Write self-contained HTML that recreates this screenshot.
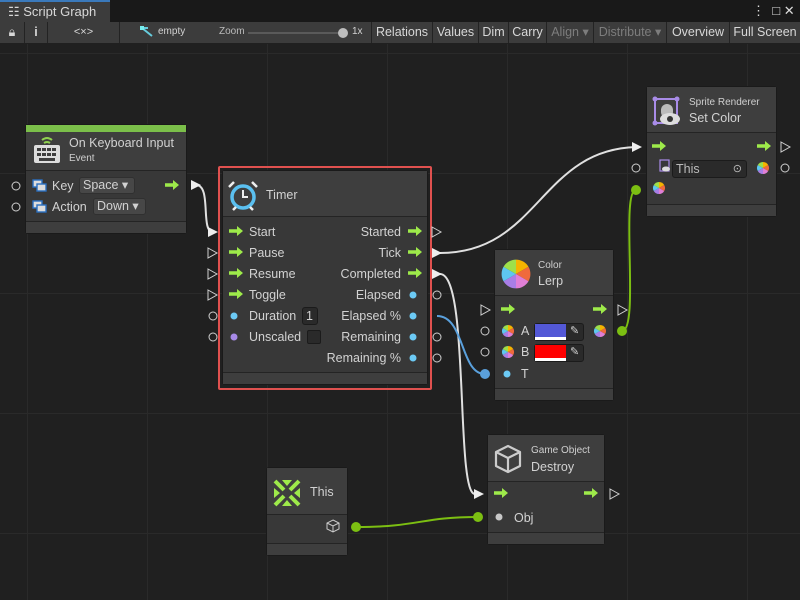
<!DOCTYPE html>
<html><head><meta charset="utf-8"><style>
*{margin:0;padding:0;box-sizing:border-box}
body{width:800px;height:600px;overflow:hidden;background:#202020;font-family:"Liberation Sans",sans-serif;color:#d2d2d2;position:relative}
.a{position:absolute}
.tb{position:absolute;top:22px;height:21px;background:#3c3c3c;border-right:1px solid #232323;font-size:12.5px;line-height:21px;text-align:center;color:#d8d8d8}
.node{position:absolute;background:#383838;border:1px solid #1a1a1a;border-radius:3px}
.hd{position:absolute;left:0;right:0;top:0;background:#3e3e3e;border-bottom:1px solid #242424}
.ft{position:absolute;left:0;right:0;bottom:0;height:12px;background:#3e3e3e;border-top:1px solid #242424}
.t{position:absolute;font-size:12.5px;white-space:nowrap;color:#d2d2d2}
.s{font-size:10px;color:#cfcfcf}
.r{text-align:right}
</style></head><body>
<!-- tab bar -->
<div class="a" style="left:0;top:0;width:800px;height:22px;background:#191919"></div>
<div class="a" style="left:0;top:0;width:110px;height:22px;background:#3c3c3c;border-top:2px solid #3a79bb"></div>
<div class="t" style="left:8px;top:4px;font-size:13px;color:#d8d8d8">&#x2637;&nbsp;Script Graph</div>
<div class="t" style="left:752px;top:3px;font-size:13px;color:#ddd">⋮&nbsp;&nbsp;□&nbsp;✕</div>
<!-- toolbar -->
<div class="a" style="left:0;top:22px;width:800px;height:21px;background:#3c3c3c;border-bottom:1px solid #232323"></div>
<div class="tb" style="left:0;width:25px">🔒︎</div>
<div class="tb" style="left:25px;width:23px;font-weight:bold">i</div>
<div class="tb" style="left:48px;width:72px;font-size:11px">&lt;×&gt;</div>
<div class="tb" style="left:120px;width:252px"></div>
<svg class="a" style="left:140px;top:26px" width="14" height="12"><path d="M2 2 L12 10 M2 2 L8 2" stroke="#6cd" stroke-width="2" fill="none"/><rect x="0" y="0" width="4" height="4" fill="#7ee"/></svg>
<div class="t" style="left:158px;top:26px;font-size:10px">empty</div>
<div class="t" style="left:219px;top:26px;font-size:10px;color:#bbb">Zoom</div>
<div class="a" style="left:248px;top:32px;width:95px;height:2px;background:#5a5a5a"></div>
<div class="a" style="left:338px;top:28px;width:10px;height:10px;border-radius:50%;background:#bdbdbd"></div>
<div class="t" style="left:352px;top:26px;font-size:10px">1x</div>
<div class="tb" style="left:372px;width:61px">Relations</div>
<div class="tb" style="left:433px;width:46px">Values</div>
<div class="tb" style="left:479px;width:30px">Dim</div>
<div class="tb" style="left:509px;width:38px">Carry</div>
<div class="tb" style="left:547px;width:47px;color:#7d7d7d">Align ▾</div>
<div class="tb" style="left:594px;width:73px;color:#7d7d7d">Distribute ▾</div>
<div class="tb" style="left:667px;width:63px">Overview</div>
<div class="tb" style="left:730px;width:70px;border-right:none">Full Screen</div>

<!-- grid -->
<svg class="a" style="left:0;top:44px" width="800" height="556">
<g stroke="#2a2a2a" stroke-width="1">
<path d="M27.5 0V556M147.5 0V556M267.5 0V556M387.5 0V556M507.5 0V556M627.5 0V556M747.5 0V556"/>
<path d="M0 9.5H800M0 129.5H800M0 249.5H800M0 369.5H800M0 489.5H800"/>
</g></svg>

<!-- Keyboard node -->
<div class="node" style="left:25px;top:124px;width:162px;height:110px">
<div class="a" style="left:0;top:0;right:0;height:7px;background:#7bbf4a"></div>
<div class="hd" style="top:7px;height:39px"></div><div class="ft"></div></div>
<svg class="a" style="left:32px;top:135px" width="30" height="30"><path d="M10 5 Q15 1 20 5 M12 8 Q15 6 18 8" stroke="#8fd14f" stroke-width="2" fill="none"/><rect x="2" y="10" width="26" height="18" rx="2" fill="#ddd"/><g fill="#3e3e3e"><rect x="5" y="13" width="4" height="3"/><rect x="10" y="13" width="4" height="3"/><rect x="15" y="13" width="4" height="3"/><rect x="20" y="13" width="4" height="3"/><rect x="5" y="18" width="4" height="3"/><rect x="10" y="18" width="4" height="3"/><rect x="15" y="18" width="4" height="3"/><rect x="20" y="18" width="4" height="3"/><rect x="7" y="23" width="16" height="3"/></g></svg>
<div class="t" style="left:69px;top:136px">On Keyboard Input</div>
<div class="t s" style="left:69px;top:153px">Event</div>
<div class="t" style="left:52px;top:179px">Key</div>
<div class="a" style="left:79px;top:177px;width:56px;height:17px;background:#474747;border:1px solid #303030;border-radius:3px;font-size:12.5px;padding-left:3px;line-height:15px">Space ▾</div>
<div class="t" style="left:52px;top:200px">Action</div>
<div class="a" style="left:93px;top:198px;width:53px;height:17px;background:#474747;border:1px solid #303030;border-radius:3px;font-size:12.5px;padding-left:3px;line-height:15px">Down ▾</div>

<!-- Timer -->
<div class="a" style="left:218px;top:166px;width:214px;height:224px;border:2px solid #e0514f;border-radius:2px"></div>
<div class="node" style="left:222px;top:170px;width:206px;height:215px"><div class="hd" style="height:46px"></div><div class="ft"></div></div>
<svg class="a" style="left:227px;top:180px" width="32" height="32"><circle cx="16" cy="17" r="11" fill="none" stroke="#5bc0f0" stroke-width="3.5"/><path d="M16 10V17H21" stroke="#eee" stroke-width="2" fill="none"/><path d="M2 7 L7 2 M30 7 L25 2 M6 30 L9 27 M26 30 L23 27" stroke="#eee" stroke-width="2.5"/></svg>
<div class="t" style="left:266px;top:188px">Timer</div>
<div class="t" style="left:249px;top:225px">Start</div>
<div class="t" style="left:249px;top:246px">Pause</div>
<div class="t" style="left:249px;top:267px">Resume</div>
<div class="t" style="left:249px;top:288px">Toggle</div>
<div class="t" style="left:249px;top:309px">Duration</div>
<div class="a" style="left:302px;top:307px;width:16px;height:18px;background:#2a2a2a;border:1px solid #1b1b1b;border-radius:3px;font-size:12.5px;padding-left:3px;line-height:16px">1</div>
<div class="t" style="left:249px;top:330px">Unscaled</div>
<div class="a" style="left:307px;top:330px;width:14px;height:14px;background:#2a2a2a;border:1px solid #1b1b1b;border-radius:2px"></div>
<div class="t r" style="right:399px;top:225px">Started</div>
<div class="t r" style="right:399px;top:246px">Tick</div>
<div class="t r" style="right:399px;top:267px">Completed</div>
<div class="t r" style="right:399px;top:288px">Elapsed</div>
<div class="t r" style="right:399px;top:309px">Elapsed %</div>
<div class="t r" style="right:399px;top:330px">Remaining</div>
<div class="t r" style="right:399px;top:351px">Remaining %</div>

<!-- Sprite Renderer -->
<div class="node" style="left:646px;top:86px;width:131px;height:131px"><div class="hd" style="height:46px"></div><div class="ft"></div></div>
<svg class="a" style="left:652px;top:96px" width="30" height="32"><rect x="3" y="3" width="22" height="24" fill="none" stroke="#a98ce8" stroke-width="2"/><circle cx="3" cy="3" r="2.5" fill="#a98ce8"/><circle cx="25" cy="3" r="2.5" fill="#a98ce8"/><circle cx="3" cy="27" r="2.5" fill="#a98ce8"/><rect x="9" y="8" width="12" height="14" rx="6" fill="#bbb"/><ellipse cx="18" cy="23" rx="10" ry="6" fill="#ddd"/><circle cx="18" cy="23" r="3" fill="#333"/></svg>
<div class="t s" style="left:689px;top:97px">Sprite Renderer</div>
<div class="t" style="left:689px;top:111px">Set Color</div>
<div class="a" style="left:672px;top:160px;width:75px;height:18px;background:#2a2a2a;border:1px solid #1b1b1b;border-radius:3px;font-size:12.5px;padding-left:3px;line-height:16px;color:#bbb">This<span style="position:absolute;right:4px;top:0;font-size:11px">⊙</span></div>

<!-- Color Lerp -->
<div class="node" style="left:494px;top:249px;width:120px;height:152px"><div class="hd" style="height:46px"></div><div class="ft"></div></div>
<div class="t s" style="left:538px;top:260px">Color</div>
<div class="t" style="left:538px;top:274px">Lerp</div>
<div class="t" style="left:521px;top:324px">A</div>
<div class="t" style="left:521px;top:345px">B</div>
<div class="t" style="left:521px;top:367px">T</div>
<div class="a" style="left:534px;top:323px;width:50px;height:18px;background:#2a2a2a;border:1px solid #1b1b1b;border-radius:3px"><div class="a" style="left:0;top:0;width:31px;height:13px;background:#5358d6;border-bottom:3px solid #fff;height:16px"></div><div class="t" style="left:35px;top:0;font-size:11px">✎</div></div>
<div class="a" style="left:534px;top:344px;width:50px;height:18px;background:#2a2a2a;border:1px solid #1b1b1b;border-radius:3px"><div class="a" style="left:0;top:0;width:31px;height:16px;background:#ff0000;border-bottom:3px solid #fff"></div><div class="t" style="left:35px;top:0;font-size:11px">✎</div></div>

<!-- This -->
<div class="node" style="left:266px;top:467px;width:82px;height:89px"><div class="hd" style="height:47px"></div><div class="ft"></div></div>
<div class="t" style="left:310px;top:485px">This</div>
<svg class="a" style="left:326px;top:519px" width="14" height="14"><path d="M7 1 L13 4 L13 10 L7 13 L1 10 L1 4 Z M1 4 L7 7 L13 4 M7 7 V13" fill="none" stroke="#ccc" stroke-width="1"/></svg>

<!-- Destroy -->
<div class="node" style="left:487px;top:434px;width:118px;height:111px"><div class="hd" style="height:47px"></div><div class="ft"></div></div>
<svg class="a" style="left:494px;top:444px" width="28" height="30"><path d="M14 2 L26 8 L26 22 L14 28 L2 22 L2 8 Z M2 8 L14 14 L26 8 M14 14 V28" fill="none" stroke="#ccc" stroke-width="2.2" stroke-linejoin="round"/></svg>
<div class="t s" style="left:531px;top:445px">Game Object</div>
<div class="t" style="left:531px;top:460px">Destroy</div>
<div class="t" style="left:514px;top:511px">Obj</div>

<!-- icons, ports, wires -->
<svg class="a" style="left:0;top:0" width="800" height="600">
<defs>
<g id="ar"><path d="M-7 -1.8H1V-5L7 0L1 5V1.8H-7Z" fill="#9eea4a"/></g>
<g id="cw"><path d="M0 0L0 -6A6 6 0 0 1 5.2 -3Z" fill="#f5b400"/><path d="M0 0L5.2 -3A6 6 0 0 1 5.2 3Z" fill="#f06a3c"/><path d="M0 0L5.2 3A6 6 0 0 1 0 6Z" fill="#e07fd6"/><path d="M0 0L0 6A6 6 0 0 1 -5.2 3Z" fill="#a87ee6"/><path d="M0 0L-5.2 3A6 6 0 0 1 -5.2 -3Z" fill="#5ec6f0"/><path d="M0 0L-5.2 -3A6 6 0 0 1 0 -6Z" fill="#9ee04a"/></g>
<g id="pk"><rect x="-6" y="-5" width="9" height="7" fill="#ddd" stroke="#2a6fc0" stroke-width="1.4"/><rect x="-2" y="-1" width="9" height="7" fill="#ddd" stroke="#2a6fc0" stroke-width="1.4"/></g>
</defs>
<g fill="none" stroke-width="2">
<path d="M196 185 C212 185 200 232 213 232" stroke="#e0e0e0"/>
<path d="M440 253 C540 253 540 147 640 147" stroke="#e0e0e0"/>
<path d="M440 274 C470 274 455 494 475 494" stroke="#e0e0e0"/>
<path d="M437 316 C465 316 460 374 485 374" stroke="#5aa0dc"/>
<path d="M622 331 C640 331 620 190 636 190" stroke="#7cbf12"/>
<path d="M356 527 C420 527 420 517 478 517" stroke="#7cbf12"/>
</g>
<g fill="#7cbf12"><circle cx="356" cy="527" r="5"/><circle cx="478" cy="517" r="5"/><circle cx="622" cy="331" r="5"/><circle cx="636" cy="190" r="5"/></g>
<circle cx="485" cy="374" r="5" fill="#5aa0dc"/>
<!-- hollow ports -->
<g fill="none" stroke="#cfcfcf" stroke-width="1"><circle cx="16" cy="186" r="4"/><circle cx="16" cy="207" r="4"/><circle cx="213" cy="316" r="4"/><circle cx="213" cy="337" r="4"/><circle cx="437" cy="295" r="4"/><circle cx="437" cy="337" r="4"/><circle cx="437" cy="358" r="4"/><circle cx="636" cy="168" r="4"/><circle cx="785" cy="168" r="4"/><circle cx="485" cy="331" r="4"/><circle cx="485" cy="352" r="4"/>
<path d="M208 248L217 253L208 258Z M208 269L217 274L208 279Z M208 290L217 295L208 300Z M432 227L441 232L432 237Z M781 142L790 147L781 152Z M481 305L490 310L481 315Z M618 305L627 310L618 315Z M610 489L619 494L610 499Z"/></g>
<g fill="#eee"><path d="M191 180L201 185L191 190Z M208 227L218 232L208 237Z M432 248L442 253L432 258Z M432 269L442 274L432 279Z M632 142L642 147L632 152Z M474 489L484 494L474 499Z"/></g>
<!-- flow arrows -->
<use href="#ar" x="172" y="185"/>
<use href="#ar" x="236" y="231"/><use href="#ar" x="236" y="252"/><use href="#ar" x="236" y="273"/><use href="#ar" x="236" y="294"/>
<use href="#ar" x="415" y="231"/><use href="#ar" x="415" y="252"/><use href="#ar" x="415" y="273"/>
<use href="#ar" x="659" y="146"/><use href="#ar" x="764" y="146"/>
<use href="#ar" x="508" y="309"/><use href="#ar" x="600" y="309"/>
<use href="#ar" x="501" y="493"/><use href="#ar" x="591" y="493"/>
<g fill="#6ccaf5"><circle cx="234" cy="316" r="3.5"/><circle cx="413" cy="295" r="3.5"/><circle cx="413" cy="316" r="3.5"/><circle cx="413" cy="337" r="3.5"/><circle cx="413" cy="358" r="3.5"/><circle cx="507" cy="374" r="3.5"/></g>
<circle cx="234" cy="337" r="3.5" fill="#a88be8"/>
<circle cx="499" cy="517" r="3.5" fill="#c8c8c8"/>
<use href="#pk" x="39" y="185"/><use href="#pk" x="39" y="206"/>
<use href="#cw" x="763" y="168"/><use href="#cw" x="659" y="188"/><use href="#cw" x="508" y="331"/><use href="#cw" x="508" y="352"/><use href="#cw" x="600" y="331"/>
<g transform="translate(516 274) scale(2.4)"><use href="#cw"/></g>
<svg x="659" y="159" width="12" height="14"><rect x="1" y="1" width="9" height="11" fill="none" stroke="#a98ce8" stroke-width="1.2"/><ellipse cx="7" cy="10" rx="4" ry="2.5" fill="#ddd"/></svg>
<!-- This icon -->
<g fill="#9eea4a" transform="translate(287 493)"><path d="M-12 -12L-3 -3M12 -12L3 -3M-12 12L-3 3M12 12L3 3" stroke="#9eea4a" stroke-width="4"/><path d="M-5 -13H5L0 -7Z M-5 13H5L0 7Z M-13 -5V5L-7 0Z M13 -5V5L7 0Z"/></g>
</svg>
</body></html>
